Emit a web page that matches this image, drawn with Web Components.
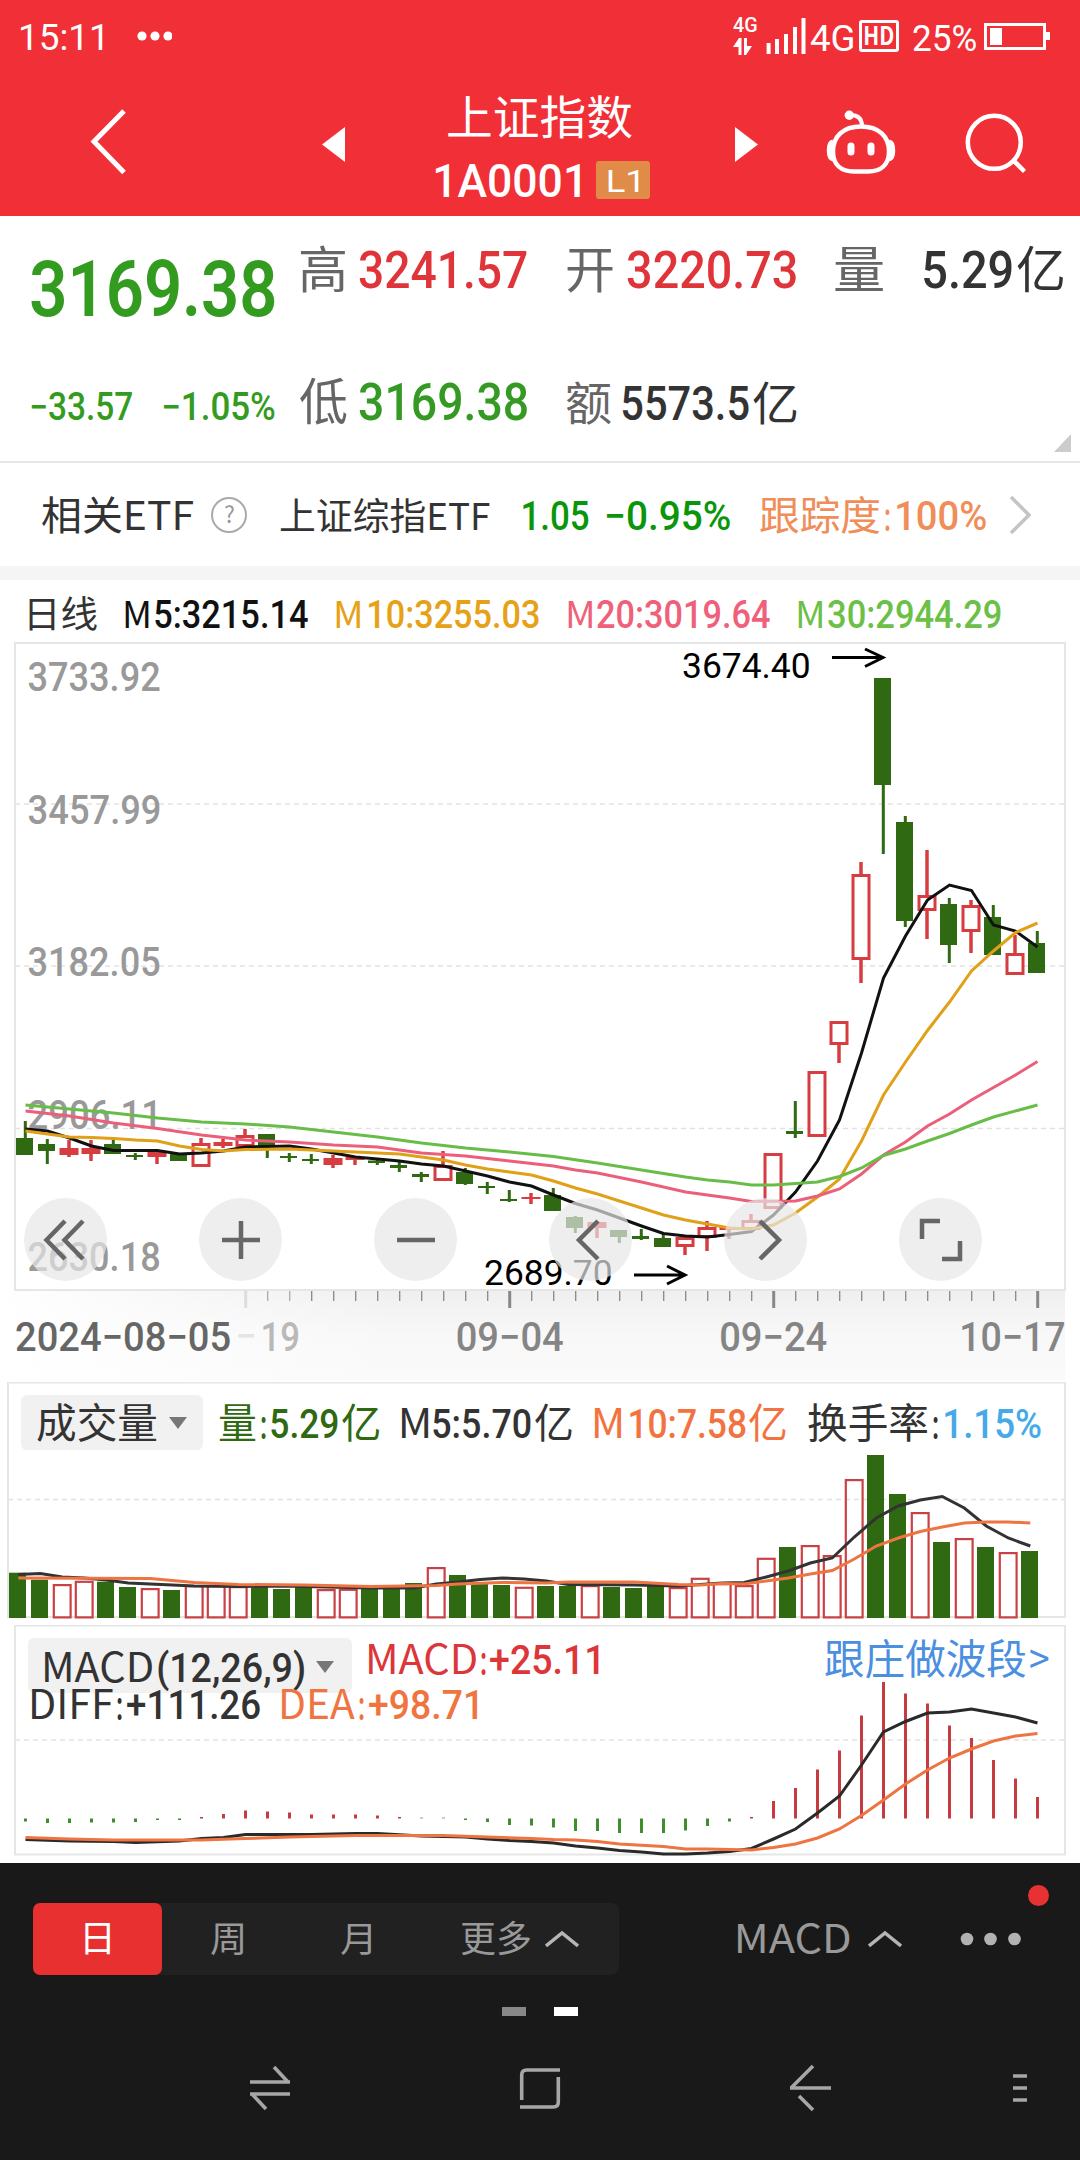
<!DOCTYPE html>
<html lang="zh-CN">
<head>
<meta charset="utf-8">
<title>上证指数 1A0001</title>
<style>
    body {
        margin: 0;
        width: 1080px;
        height: 2160px;
        background: #fff;
        color: #333;
        font-family: Roboto, "Noto Sans CJK SC", sans-serif;
        overflow: hidden;
    }
</style>
</head>
<body>
<status-bar></status-bar>
<title-bar></title-bar>
<quote-panel></quote-panel>
<etf-row></etf-row>
<ma-legend></ma-legend>
<kline-chart></kline-chart>
<volume-chart></volume-chart>
<macd-chart></macd-chart>
<bottom-bar></bottom-bar>

<script>
const NUM = 'Roboto, "Noto Sans CJK SC", sans-serif';
const HAN = '"Noto Sans CJK SC", sans-serif';
const GREEN = '#2f6912';
const RED = '#d63c40';

const ctx = document.createElement('canvas').getContext('2d');

// svg text stretched so that its ink runs from x to x + w
function inkText(text, x, w, y, size, weight = 500, fill = 'currentColor') {
    const family = /\d/.test(text) ? NUM : HAN;
    ctx.font = `${weight} ${size}px ${family}`;
    const m = ctx.measureText(text);
    const k = w / (m.actualBoundingBoxRight + m.actualBoundingBoxLeft);
    const safe = text.replace(/</g, '&lt;').replace(/>/g, '&gt;');
    return `<text transform="translate(${(x + m.actualBoundingBoxLeft * k).toFixed(2)} ${y}) scale(${k.toFixed(4)} 1)"
        style='font: ${weight} ${size}px ${family}' fill="${fill}">${safe}</text>`;
}

function element(name, html, setup) {
    const tmp = document.createElement('template');
    tmp.innerHTML = html;
    customElements.define(name, class extends HTMLElement {
        constructor() {
            super();
            this.attachShadow({mode: 'open'});
            this.shadowRoot.appendChild(document.importNode(tmp.content, true));
        }

        connectedCallback() {
            if (setup) setup(this, this.shadowRoot);
        }
    });
}

// <fit-text w size gap weight>: its box is the cap height, so rows align on the baseline
element('fit-text', `
    <style>
        :host { display: block; flex: none; }
        svg { display: block; overflow: visible; }
    </style>
    <svg></svg>
`, (host, root) => {
    const text = host.textContent.trim();
    const w = +host.getAttribute('w');
    const size = +host.getAttribute('size');
    const weight = host.getAttribute('weight') || (/\d/.test(text) ? 500 : 400);
    const h = Math.round(size * 0.711);
    host.style.marginLeft = (host.getAttribute('gap') || 0) + 'px';
    const svg = root.querySelector('svg');
    svg.setAttribute('width', w);
    svg.setAttribute('height', h);
    svg.innerHTML = inkText(text, 0, w, h, size, weight);
});

element('status-bar', `
    <style>
        :host { display: flex; height: 76px; background: #f12f36; color: #fff; }
        .left { display: flex; align-items: flex-end; height: 50px; padding-left: 21px; }
        .right { display: flex; margin-left: auto; padding: 18px 30px 0 0; height: 40px; }
        .dots { margin: 0 0 9px 31px; }
        .net { width: 24px; }
        .base { display: flex; align-items: flex-end; height: 33px; }
        .hd { display: flex; align-items: center; justify-content: center; width: 34px; height: 26px; border: 3px solid; border-radius: 3px; margin: 2px 0 0 6px; }
        svg { display: block; flex: none; }
    </style>
    <div class="left">
        <fit-text w="82" size="37" weight="400">15:11</fit-text>
        <svg class="dots" width="38" height="10" fill="#fff"><circle cx="8" cy="5" r="4.6"/><circle cx="21" cy="5" r="4.6"/><circle cx="34" cy="5" r="4.6"/></svg>
    </div>
    <div class="right">
        <div class="net">
            <fit-text w="24" size="20">4G</fit-text>
            <svg width="20" height="24" fill="#fff"><path d="M0 15L6 6h2.500v17H5.500V15zM11 6h3v8h5l-6 9h-2z"/></svg>
        </div>
        <svg width="53" height="36" stroke="#fff" stroke-width="4"><path d="M11.6 25v11M20 21v15M29 16v20M38 9v27M46.500 0v36"/></svg>
        <div class="base"><fit-text w="43" size="36" weight="400">4G</fit-text></div>
        <div class="hd"><fit-text w="29" size="26" weight="700">HD</fit-text></div>
        <div class="base"><fit-text w="63" size="36" gap="14" weight="400">25%</fit-text></div>
        <svg width="67" height="32" style="margin-left:7px"><path d="M2.500 6.500h59v24h-59z" fill="none" stroke="#fff" stroke-width="3"/><path d="M7 10h12v17H7zM63 14h4v8h-4z" fill="#fff"/></svg>
    </div>
`);

element('title-bar', `
    <style>
        :host { display: flex; height: 140px; background: #f12f36; color: #fff; }
        svg { display: block; flex: none; }
        .mid { width: 390px; padding-top: 25px; }
        .row { display: flex; align-items: flex-end; }
        .name { height: 33px; padding-left: 103px; }
        .code { height: 38px; padding: 27px 0 0 90px; align-items: center; }
        .badge { display: flex; align-items: center; justify-content: center; width: 54px; height: 38px; margin-left: 16px; border-radius: 3px; background: #e08c48; }
    </style>
    <svg width="345" height="140"><path d="M124 35L94 65.500 124 96.500" fill="none" stroke="#fff" stroke-width="5"/><path d="M345 51v35l-23-17.500z" fill="#fff"/></svg>
    <div class="mid">
        <div class="row name"><fit-text w="184" size="46">上证指数</fit-text></div>
        <div class="row code"><fit-text w="145" size="47">1A0001</fit-text><div class="badge"><fit-text w="31" size="32" weight="400">L1</fit-text></div></div>
    </div>
    <svg width="345" height="140" fill="none" stroke="#fff" stroke-width="4.500">
        <path d="M0 51v35l23-17.500z" fill="#fff" stroke="none"/>
        <path d="M126 50.500c18 0 28 10 28 25 0 13-8 20-21 20h-14c-13 0-21-7-21-20 0-15 10-25 28-25z"/>
        <path d="M98 66c-5 1-5 16 0 17M154 66c5 1 5 16 0 17" stroke-width="5"/>
        <path d="M127 50c0-7-4-11-12-11" stroke-width="4"/>
        <circle cx="114.300" cy="39.300" r="4.700" fill="#fff" stroke="none"/>
        <path d="M116 70v6M136 70v6" stroke-width="7" stroke-linecap="round"/>
        <circle cx="259.300" cy="66.300" r="26.500"/><path d="M279 85l10.500 10.500"/>
    </svg>
`);

element('quote-panel', `
    <style>
        :host { display: flex; position: relative; height: 245px; border-bottom: 2px solid #e6e6e6; background: #fff; }
        .row { display: flex; align-items: flex-end; }
        .price { padding: 45px 0 0 31px; width: 269px; color: #339c20; }
        .price .row { margin-top: 77px; }
        .cells { padding-top: 35px; color: #333; }
        .cells .row + .row { margin-top: 95px; }
        .k { color: #666; }
        .up { color: #df3439; }
        .down { color: #359a24; }
        i { position: absolute; right: 9px; bottom: 9px; border-left: 17px solid transparent; border-bottom: 18px solid #ccc; }
    </style>
    <div class="price">
        <fit-text w="244" size="77" weight="600">3169.38</fit-text>
        <div class="row"><fit-text w="101" size="38">−33.57</fit-text><fit-text w="112" gap="31" size="38">−1.05%</fit-text></div>
    </div>
    <div class="cells">
        <div class="row">
            <fit-text class="k" w="45" size="50">高</fit-text><fit-text class="up" w="168" gap="14" size="52">3241.57</fit-text>
            <fit-text class="k" w="46" gap="40" size="50">开</fit-text><fit-text class="up" w="169" gap="14" size="52">3220.73</fit-text>
            <fit-text class="k" w="48" gap="39" size="50">量</fit-text><fit-text w="88" gap="41" size="52">5.29</fit-text><fit-text w="46" gap="5" size="50">亿</fit-text>
        </div>
        <div class="row">
            <fit-text class="k" w="47" size="50">低</fit-text><fit-text class="down" w="168" gap="12" size="52">3169.38</fit-text>
            <fit-text class="k" w="45" gap="39" size="46">额</fit-text><fit-text w="127" gap="11" size="48">5573.5</fit-text><fit-text w="44" gap="4" size="46">亿</fit-text>
        </div>
    </div>
    <i></i>
`);

element('etf-row', `
    <style>
        :host { display: flex; height: 103px; border-bottom: 14px solid #f5f5f5; background: #fff; }
        .row { display: flex; align-items: flex-end; height: 67px; padding-left: 42px; }
        .q { box-sizing: border-box; display: flex; align-items: center; justify-content: center; width: 36px; height: 36px; margin: 0 0 -3px 18px; border: 2px solid #aaa; border-radius: 50%; color: #999; }
        .g { color: #0a960a; }
        .o { color: #f08d58; }
        svg { display: block; margin: 0 0 -4px 23px; }
    </style>
    <div class="row">
        <fit-text w="151" size="40">相关ETF</fit-text>
        <span class="q"><fit-text w="10" size="23">?</fit-text></span>
        <fit-text w="210" gap="33" size="37">上证综指ETF</fit-text>
        <fit-text class="g" w="66" gap="33" size="40">1.05</fit-text>
        <fit-text class="g" w="123" gap="18" size="40">−0.95%</fit-text>
        <fit-text class="o" w="120" gap="30" size="40">跟踪度</fit-text>
        <fit-text class="o" w="5" gap="5" size="40">:</fit-text>
        <fit-text class="o" w="89" gap="7" size="40">100%</fit-text>
        <svg width="22" height="38" fill="none" stroke="#c4c4c4" stroke-width="3.500"><path d="M2 1l18 18L2 37"/></svg>
    </div>
`);

element('ma-legend', `
    <style>
        :host { display: flex; align-items: flex-end; height: 48px; padding: 0 0 14px 28.5px; background: #fff; }
        .m5 { color: #111; }
        .m10 { color: #e6a117; }
        .m20 { color: #ef607b; }
        .m30 { color: #6cc048; }
    </style>
    <fit-text w="68" size="37">日线</fit-text>
    <fit-text class="m5" w="24" gap="28.5" size="37">M</fit-text><fit-text class="m5" w="153" gap="6" size="38">5:3215.14</fit-text>
    <fit-text class="m10" w="24.5" gap="28" size="37">M</fit-text><fit-text class="m10" w="170" gap="8" size="38">10:3255.03</fit-text>
    <fit-text class="m20" w="24.5" gap="29" size="37">M</fit-text><fit-text class="m20" w="173" gap="5" size="38">20:3019.64</fit-text>
    <fit-text class="m30" w="24.5" gap="28" size="37">M</fit-text><fit-text class="m30" w="173" gap="5.5" size="38">30:2944.29</fit-text>
`);

element('round-button', `
    <style>
        :host { display: flex; align-items: center; justify-content: center; width: 83px; height: 83px; border-radius: 50%; background: rgba(231, 231, 231, .69); }
        ::slotted(svg) { display: block; }
    </style>
    <slot></slot>
`);

// polyline from [index, y] pairs
function line(points, x0, color, width = 3) {
    const p = points.map(([i, y]) => `${x0 + i * 22},${y}`).join(' ');
    return `<polyline points="${p}" fill="none" stroke="${color}" stroke-width="${width}"/>`;
}

function box(x, top, bottom, stroke = 3) {
    if (bottom - top < 10) return `<path d="M${x - 9.5} ${top}h19v${bottom - top}h-19z" fill="${RED}"/>`;
    const s = stroke / 2;
    return `<rect x="${x - 9.5 + s}" y="${top + s}" width="${19 - stroke}" height="${bottom - top - stroke}" fill="#fff" stroke="${RED}" stroke-width="${stroke}"/>`;
}

const dash = 'stroke="#e2e2e2" stroke-width="1.500" stroke-dasharray="5 4"';

// dir, body top, body bottom, wick top, wick bottom
const candles = [
    ['g',1138,1155,1121,1155],['g',1144,1151,1139,1164],['r',1148,1155,1140,1157],['r',1148,1154,1140,1161],
    ['g',1144,1154,1139,1154],['g',1155,1157,1153,1160],['r',1152,1157,1152,1164],['g',1154,1161,1154,1161],
    ['r',1143,1167,1138,1167],['r',1142,1146,1139,1148],['r',1135,1147,1129,1147],['g',1134,1147,1134,1158],
    ['g',1156,1158,1153,1162],['g',1159,1161,1154,1164],['r',1158,1165,1155,1168],['r',1157,1160,1157,1165],
    ['g',1160.5,1163,1159,1165],['g',1165,1168,1162,1172],['g',1174,1177,1172,1182],['r',1165,1181,1151,1181],
    ['g',1172,1184,1168,1185],['g',1186,1188,1182,1194],['g',1199,1201,1190,1202],['r',1197,1199,1193,1204],
    ['g',1195,1211,1188,1211],['g',1217,1228,1216,1233],['r',1222,1228,1221,1238],['g',1230,1237,1230,1243],
    ['g',1236,1239,1229,1240],['g',1238,1247,1234,1247],['r',1237,1247,1237,1255],['r',1227,1238,1221,1251],
    ['r',1227,1230,1227,1239],['r',1220,1230,1214,1230],['r',1153,1209,1153,1209],['g',1131,1134,1101,1138],
    ['r',1071,1137,1071,1137],['r',1021,1045,1021,1063],['r',874,960,862,983],['g',678,785,678,854],
    ['g',822,921,816,927],['r',895,911,850,939],['g',904,945,898,963],['r',905,932,900,953],
    ['g',917,955,905,955],['r',953,975,935,975],['g',943,973,931,973]
];

const ma5 = [[0,1129],[1,1131],[2,1138],[3,1146],[4,1150.5],[6,1150.5],[7,1154],[8,1153],[9,1151],[10,1147],[11,1146.5],[12,1146],[13,1149],[14,1153],[15,1157],[16,1159],[17,1161],[18,1164],[19,1166],[20,1171],[21,1176],[22,1182],[23,1186],[24,1195],[25,1203.5],[26,1210],[27,1218],[28,1226],[29,1233.5],[30,1236],[31,1237],[32,1234.5],[33,1231.5],[34,1215],[35,1192],[36,1161],[37,1120],[38,1053],[39,978],[40,936],[41,900],[42,885],[43,890.5],[44,925],[45,931],[46,947]];
const ma10 = [[0,1131],[2,1137],[3,1137.5],[4,1138.5],[5,1140],[6,1141],[7,1146],[8,1149.5],[9,1151],[10,1149.5],[12,1149],[13,1150],[15,1152],[17,1154],[18,1157],[19,1160],[20,1165],[21,1169],[22,1172],[23,1175],[24,1181],[25,1188],[26,1194],[27,1201],[28,1208],[29,1215],[30,1220],[31,1224],[32,1228],[33,1229],[34,1225],[35,1213],[36,1197],[37,1179],[38,1141],[39,1095],[40,1062],[41,1030.5],[42,1002],[43,971],[44,951],[45,932.5],[46,923]];
const ma20 = [[0,1111],[2,1116],[4,1123],[6,1128.5],[8,1135],[10,1140],[12,1142],[14,1145],[16,1147],[18,1153],[20,1156],[22,1161],[24,1166],[25,1170],[26,1173],[28,1182],[30,1192],[32,1198],[33,1201.5],[35,1201],[36,1196],[37,1189],[38,1174],[39,1155],[40,1142],[41,1126],[42,1114],[43,1100],[45,1075],[46,1061.5]];
const ma30 = [[0,1105],[2,1109],[4,1113],[6,1118],[8,1122],[10,1124],[12,1127],[14,1132],[16,1137],[18,1143],[20,1148],[22,1152],[24,1156.5],[26,1163],[28,1170],[30,1177],[31,1180],[32,1182],[33,1185],[34,1185],[36,1182],[37,1176.5],[38,1168],[39,1155.5],[40,1149],[41,1141],[42,1133.5],[43,1125],[44,1117],[46,1105]];

element('kline-chart', `
    <style>
        :host { display: grid; height: 740px; }
        svg, .tools { grid-area: 1 / 1; }
        svg { display: block; }
        .tools { display: flex; gap: 92px; padding: 556px 0 0 24px; align-self: start; }
    </style>
    <svg class="plot" width="1080" height="740" viewBox="0 642 1080 740"></svg>
    <div class="tools">
        <round-button><svg width="48" height="48" fill="none" stroke="#666" stroke-width="4.500"><path d="M23 5L4.500 24 23 43M41 5L22.500 24 41 43"/></svg></round-button>
        <round-button><svg width="48" height="48" stroke="#666" stroke-width="4.500"><path d="M5 24h38M24 5v38"/></svg></round-button>
        <round-button><svg width="48" height="48" stroke="#666" stroke-width="4.500"><path d="M5 24h38"/></svg></round-button>
        <round-button><svg width="48" height="48" fill="none" stroke="#666" stroke-width="4.500"><path d="M31 5L12 24l19 19"/></svg></round-button>
        <round-button><svg width="48" height="48" fill="none" stroke="#666" stroke-width="4.500"><path d="M18 5l19 19-19 19"/></svg></round-button>
        <round-button><svg width="48" height="48" fill="none" stroke="#666" stroke-width="4.500"><path d="M23 5H5v18M43 25v18H25"/></svg></round-button>
    </div>
`, (host, root) => {
    let s = `
        <defs>
            <linearGradient id="shade" x1="0" y1="0" x2="0" y2="1"><stop offset="0" stop-color="#efefef"/><stop offset=".5" stop-color="#f8f8f8"/><stop offset="1" stop-color="#fafafa"/></linearGradient>
            <linearGradient id="fade"><stop offset="0" stop-color="#fff"/><stop offset="1" stop-color="#fff" stop-opacity="0"/></linearGradient>
        </defs>
        <path d="M0 1290h1065v90H0z" fill="url(#shade)"/>
        <path d="M0 1289h400v93H0z" fill="url(#fade)"/>
        <path d="M15 804h1050M15 966h1050M15 1128.500h1050" ${dash}/>
        <rect x="15" y="643" width="1050" height="647" fill="none" stroke="#e6e6e6" stroke-width="2"/>`;

    candles.forEach(([dir, top, bottom, high, low], i) => {
        const x = 25 + i * 22;
        if (dir === 'g') {
            s += `<path d="M${x - 9} ${top}h17v${bottom - top}h-17z" fill="${GREEN}"/><path d="M${x + 0.3} ${high}V${low}" stroke="${GREEN}" stroke-width="3"/>`;
        } else {
            s += `<path d="M${x} ${high}V${low}" stroke="${RED}" stroke-width="3.500"/>` + box(x, top, bottom);
        }
    });

    [['3733.92', 691], ['3457.99', 824], ['3182.05', 976], ['2906.11', 1129], ['2630.18', 1271]].forEach(([t, y]) => {
        s += inkText(t, 28.5, t === '2906.11' ? 127 : 131, y, 41, 500, '#999');
    });

    s += line(ma5, 25.5, '#111') + line(ma10, 25.5, '#e0a018') + line(ma20, 25.5, '#ec5f7b') + line(ma30, 25.5, '#68bd48');

    s += inkText('3674.40', 683, 126, 678, 35, 400, '#000');
    s += inkText('2689.70', 485, 126, 1285, 35, 400, '#000');
    s += '<path d="M832 657.500h50M865 649l18 8.500-18 9M634 1275h50M667 1266l18 9-18 9" fill="none" stroke="#000" stroke-width="3"/>';

    // date axis
    for (let i = 10; i <= 46; i++) {
        const x = 25.7 + i * 22;
        const major = (i - 10) % 12 === 0;
        const color = i === 10 ? '#ddd' : i < 13 ? '#aaa' : '#888';
        s += `<path d="M${x} 1291v${major ? 17 : 10}" stroke="${color}" stroke-width="${major ? 3 : 1.3}"/>`;
    }
    s += inkText('−', 238, 16, 1351, 41, 500, '#e4e4e4');
    s += inkText('19', 263, 35, 1351, 41, 500, '#b9b9b9');
    s += inkText('2024−08−05', 16, 214, 1351, 41, 500, '#666');
    s += inkText('09−04', 457.5, 106, 1351, 41, 500, '#858585');
    s += inkText('09−24', 721, 106, 1351, 41, 500, '#858585');
    s += inkText('10−17', 962, 102.5, 1351, 41, 500, '#858585');
    root.querySelector('.plot').innerHTML = s;
});

element('drop-button', `
    <style>
        :host { display: flex; align-items: flex-end; height: 55px; border-radius: 6px; background: #f1f1f1; box-sizing: border-box; flex: none; }
        i { margin: 0 0 9px 12px; border: 9px solid transparent; border-top: 12px solid #777; border-bottom: 0; }
    </style>
    <slot></slot><i></i>
`);

const volumes = 'g1572.7 g1579.7 r1584 r1580.7 g1581.7 g1587 r1588 g1590 r1585 r1585 r1586 g1586 g1589 g1586.7 r1589 r1588.7 g1587 g1587 g1583 r1567 g1575 g1583 g1585 r1586.7 g1586 g1586 r1585 g1587 g1588 g1586 r1587 r1577.7 r1583 r1585 r1557.7 g1547 r1545 r1555 r1479 g1455 g1494 r1512 g1542 r1538 g1547 r1552 g1551'.split(' ');
const vol5 = [[0,1574.5],[1,1573.5],[2,1577],[3,1578],[4,1580],[5,1583],[6,1584],[7,1585],[8,1586],[10,1586.5],[12,1586],[14,1587],[16,1588],[18,1588],[19,1584],[20,1582],[21,1579.5],[22,1578],[23,1579],[24,1581],[25,1584.5],[28,1585],[30,1586],[32,1583],[33,1582.5],[34,1577],[35,1571],[36,1563],[37,1558],[38,1537],[39,1518],[40,1506],[41,1500],[42,1496.5],[43,1508],[44,1526],[45,1538],[46,1546]];
const vol10 = [[0,1578],[6,1578.5],[8,1582.5],[10,1584.5],[13,1585],[16,1586.5],[19,1585.5],[20,1584],[22,1582.5],[24,1583],[25,1582],[28,1582],[30,1584.5],[31,1585],[32,1583.5],[33,1584],[34,1581],[35,1578],[36,1574],[37,1570.5],[38,1559],[39,1546],[40,1538],[41,1531.5],[42,1527],[43,1523],[44,1522],[45,1522],[46,1523]];

element('volume-chart', `
    <style>
        :host { display: grid; height: 243px; }
        .plot, .legend { grid-area: 1 / 1; }
        .plot { display: block; }
        .legend { display: flex; align-items: flex-start; padding: 13px 0 0 21px; align-self: start; }
        drop-button { width: 182px; padding: 0 0 12px 16px; }
        .vals { display: flex; align-items: flex-end; height: 43px; padding-left: 16px; }
        .g { color: #2f6912; }
        .o { color: #f2733f; }
        .b { color: #45aae8; }
    </style>
    <svg class="plot" width="1080" height="243" viewBox="0 1382 1080 243"></svg>
    <div class="legend">
        <drop-button><fit-text w="120" size="41">成交量</fit-text></drop-button>
        <div class="vals">
            <fit-text class="g" w="37" size="41">量</fit-text><fit-text class="g" w="5" gap="5" size="41">:</fit-text><fit-text class="g" w="66.5" gap="5" size="41">5.29</fit-text><fit-text class="g" w="37.5" gap="4" size="41">亿</fit-text>
            <fit-text w="27" gap="23" size="41">M</fit-text><fit-text w="98" gap="4" size="41">5:5.70</fit-text><fit-text w="37" gap="4" size="41">亿</fit-text>
            <fit-text class="o" w="27" gap="23" size="41">M</fit-text><fit-text class="o" w="116" gap="8" size="41">10:7.58</fit-text><fit-text class="o" w="37" gap="3" size="41">亿</fit-text>
            <fit-text w="119" gap="22" size="41">换手率</fit-text><fit-text w="5" gap="6" size="41">:</fit-text><fit-text class="b" w="96" gap="7" size="41">1.15%</fit-text>
        </div>
    </div>
`, (host, root) => {
    let s = `<path d="M8 1499.500h1057" ${dash}/><rect x="8" y="1382.500" width="1057" height="234.500" fill="none" stroke="#e6e6e6" stroke-width="2"/>`;
    volumes.forEach((v, i) => {
        const x = 9 + i * 22;
        const top = +v.slice(1);
        s += v[0] === 'g'
            ? `<path d="M${x} ${top}h17V1618h-17z" fill="${GREEN}"/>`
            : box(x + 9.2, top, 1618.5, 2.2).replace('fill="#fff"', 'fill="none"').replace(RED, '#c94045');
    });
    s += line(vol5, 18.3, '#333') + line(vol10, 18.3, '#ee7441');
    root.querySelector('.plot').innerHTML = s;
});

// histogram offsets from the zero line
const hist = [3,4.5,4.5,4,4,3.5,1.5,1.5,-1.5,-4.5,-8,-7,-6,-4,-4,-4,-3,-1.5,-1,-1,1.5,3.5,6.5,7,9,12.5,12.5,14.5,14.5,14.5,12,7.5,3,-1.5,-17.5,-30.5,-49,-68,-103,-136.5,-125,-115,-93,-80.5,-58.5,-40,-21.5];
const diff = [[0,1839.5],[2,1841],[4,1841.5],[5,1842.5],[7,1841],[8,1838.5],[9,1837.5],[10,1834.5],[13,1834.5],[15,1833.5],[16,1833.5],[18,1836],[20,1837],[21,1839],[22,1840.5],[23,1841.5],[24,1843],[25,1846],[26,1848],[27,1850.5],[28,1852],[29,1854],[30,1854],[31,1853],[32,1851.5],[33,1848.5],[34,1839],[35,1829],[36,1813],[37,1796],[38,1765],[39,1732],[40,1721.5],[41,1713],[42,1712],[43,1709],[44,1713],[45,1717],[46,1723]];
const dea = [[0,1837.5],[2,1839],[4,1840],[6,1840],[8,1840],[10,1838.5],[12,1837],[15,1835.5],[19,1835.5],[21,1837],[23,1838.5],[24,1839.5],[25,1840],[26,1841.5],[27,1844],[29,1846.5],[30,1849],[31,1849],[33,1850],[34,1847.5],[35,1844],[36,1838],[37,1829],[38,1815.5],[39,1800],[40,1784],[41,1770],[42,1758],[43,1749],[44,1741],[45,1736],[46,1733.5]];

element('macd-chart', `
    <style>
        :host { display: grid; height: 238px; }
        .plot, .legend { grid-area: 1 / 1; }
        .plot { display: block; }
        .legend { padding-top: 13px; align-self: start; }
        .row { display: flex; }
        .first { height: 52px; padding-left: 28px; }
        .second { align-items: flex-end; height: 29px; padding-left: 32px; }
        drop-button { width: 324px; padding: 0 0 11px 17px; }
        .vals { display: flex; align-items: flex-end; height: 36px; padding-left: 17px; }
        .r { color: #dc353a; }
        .o { color: #ef7440; }
        .link { color: #4b8fe0; }
    </style>
    <svg class="plot" width="1080" height="238" viewBox="0 1625 1080 238"></svg>
    <div class="legend">
        <div class="row first">
            <drop-button><fit-text w="107" size="41">MACD</fit-text><fit-text w="146" gap="6" size="41">(12,26,9)</fit-text></drop-button>
            <div class="vals">
                <fit-text class="r" w="107" size="41">MACD</fit-text><fit-text class="r" w="5" gap="5" size="41">:</fit-text><fit-text class="r" w="109" gap="4" size="41">+25.11</fit-text>
                <fit-text class="link" w="201" gap="226" size="41">跟庄做波段</fit-text><fit-text class="link" w="19" gap="4" size="41">></fit-text>
            </div>
        </div>
        <div class="row second">
            <fit-text w="81" size="41">DIFF</fit-text><fit-text w="5" gap="4" size="41">:</fit-text><fit-text w="133" gap="5" size="41">+111.26</fit-text>
            <fit-text class="o" w="73" gap="22" size="41">DEA</fit-text><fit-text class="o" w="5" gap="4" size="41">:</fit-text><fit-text class="o" w="108.5" gap="4.5" size="41">+98.71</fit-text>
        </div>
    </div>
`, (host, root) => {
    let s = `<path d="M15 1740h1050" ${dash}/><rect x="15" y="1625.500" width="1050" height="229" fill="none" stroke="#e6e6e6" stroke-width="2"/>`;
    hist.forEach((h, i) => {
        const color = Math.abs(h) === 1 ? '#999' : h > 0 ? '#3d8f2c' : '#c53b3f';
        s += `<path d="M${25.5 + i * 22} 1818.500v${h}" stroke="${color}" stroke-width="3"/>`;
    });
    s += line(diff, 25.5, '#2a2a2a') + line(dea, 25.5, '#ee7441');
    root.querySelector('.plot').innerHTML = s;
});

element('bottom-bar', `
    <style>
        :host { display: block; height: 297px; background: #191919; color: #999; }
        svg { display: block; flex: none; }
        .bar { position: relative; display: flex; align-items: center; height: 72px; padding: 40px 0 0 33px; }
        .tabs { display: flex; width: 586px; height: 72px; border-radius: 8px; background: #212121; }
        .tab { box-sizing: border-box; display: flex; flex: none; align-items: center; justify-content: center; width: 129px; }
        .on { border-radius: 7px; background: #e93030; color: #fff; }
        .more { width: 199px; }
        .more svg { margin-left: 15px; }
        .ind { display: flex; align-items: center; margin-left: 119px; gap: 18px; }
        .dots { margin-left: 58px; }
        .new { position: absolute; left: 1028px; top: 22px; width: 21px; height: 21px; border-radius: 50%; background: #e83133; }
        .pager { display: flex; justify-content: center; gap: 28px; margin-top: 32px; }
        .pager b { width: 24px; height: 9px; background: #888; }
        .pager b + b { background: #fff; }
        .nav { display: flex; margin-top: 46px; }
    </style>
    <div class="bar">
        <div class="tabs">
            <div class="tab on"><fit-text w="25" size="37">日</fit-text></div>
            <div class="tab"><fit-text w="32" size="35">周</fit-text></div>
            <div class="tab"><fit-text w="30" size="35">月</fit-text></div>
            <div class="tab more"><fit-text w="69" size="36">更多</fit-text><svg width="34" height="18" fill="none" stroke="#b5b5b5" stroke-width="3.500"><path d="M1 16L17 3l16 13"/></svg></div>
        </div>
        <div class="ind"><fit-text w="112" size="40">MACD</fit-text><svg width="34" height="18" fill="none" stroke="#b5b5b5" stroke-width="3.500"><path d="M1 16L17 3l16 13"/></svg></div>
        <svg class="dots" width="62" height="14" fill="#b2b2b2"><circle cx="7" cy="7" r="6.300"/><circle cx="30.500" cy="7" r="6.300"/><circle cx="54.500" cy="7" r="6.300"/></svg>
        <i class="new"></i>
    </div>
    <div class="pager"><b></b><b></b></div>
    <div class="nav">
        <svg width="1080" height="60" fill="none" stroke="#a6a6a6" stroke-width="3.600">
            <path d="M250 20h40M274 5l14 15M290 32h-40M266 47l-14-15"/>
            <path d="M521.700 38V13q0-5 5-5H560M558.300 15v25q0 5-5 5H520"/>
            <path d="M831 26h-41M813 4l-22 22M799 34l14 14"/>
            <path d="M1013 14h14M1013 26h14M1013 38h14"/>
        </svg>
    </div>
`);
</script>
</body>
</html>
